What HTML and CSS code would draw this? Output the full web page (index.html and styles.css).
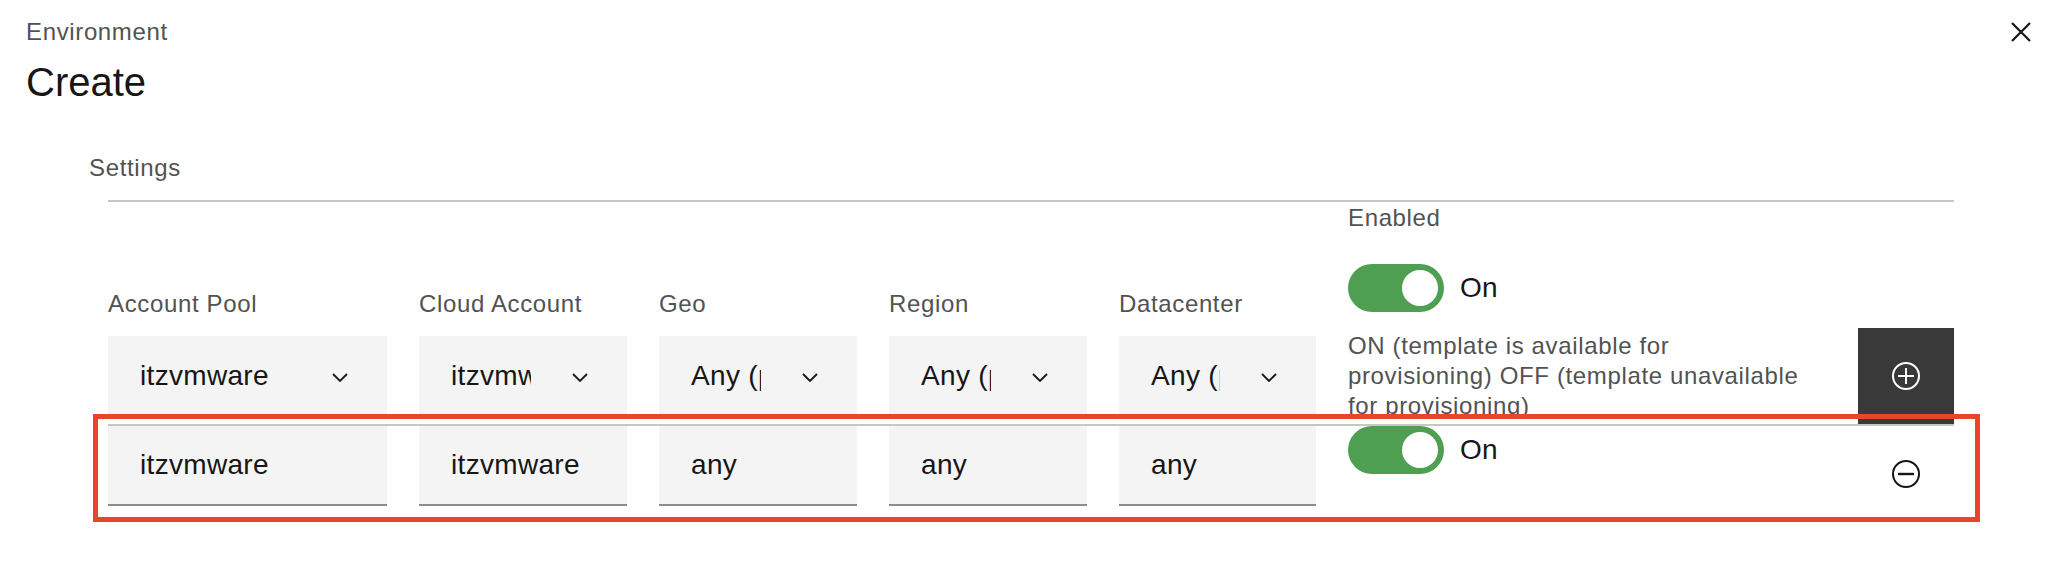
FILE: index.html
```html
<!DOCTYPE html>
<html lang="en">
<head>
<meta charset="utf-8">
<title>Environment - Create</title>
<link rel="stylesheet" href="styles.css">
</head>
<body>
<div class="modal">
  <header class="modal-header">
    <div class="titles">
      <p class="modal-label">Environment</p>
      <h2 class="modal-heading">Create</h2>
    </div>
    <button class="close" aria-label="Close">
      <svg width="20" height="20" viewBox="0 0 20 20"><path d="M1 1L19 19M19 1L1 19" stroke="#161616" stroke-width="2.2" fill="none"/></svg>
    </button>
  </header>

  <section class="settings">
    <p class="section-title">Settings</p>
    <div class="table">
      <div class="row row-first">
        <div class="field">
          <span class="field-label">Account Pool</span>
          <div class="select"><span class="select-text">itzvmware</span><svg class="chevron" width="16" height="9" viewBox="0 0 16 9"><polyline points="1,1 8,8 15,1" fill="none" stroke="#161616" stroke-width="1.8"/></svg></div>
        </div>
        <div class="field">
          <span class="field-label">Cloud Account</span>
          <div class="select"><span class="select-text">itzvmware</span><svg class="chevron" width="16" height="9" viewBox="0 0 16 9"><polyline points="1,1 8,8 15,1" fill="none" stroke="#161616" stroke-width="1.8"/></svg></div>
        </div>
        <div class="field">
          <span class="field-label">Geo</span>
          <div class="select"><span class="select-text">Any (pick one)</span><svg class="chevron" width="16" height="9" viewBox="0 0 16 9"><polyline points="1,1 8,8 15,1" fill="none" stroke="#161616" stroke-width="1.8"/></svg></div>
        </div>
        <div class="field">
          <span class="field-label">Region</span>
          <div class="select"><span class="select-text">Any (pick one)</span><svg class="chevron" width="16" height="9" viewBox="0 0 16 9"><polyline points="1,1 8,8 15,1" fill="none" stroke="#161616" stroke-width="1.8"/></svg></div>
        </div>
        <div class="field">
          <span class="field-label">Datacenter</span>
          <div class="select"><span class="select-text">Any (pick one)</span><svg class="chevron" width="16" height="9" viewBox="0 0 16 9"><polyline points="1,1 8,8 15,1" fill="none" stroke="#161616" stroke-width="1.8"/></svg></div>
        </div>
        <div class="toggle-col">
          <span class="field-label toggle-label">Enabled</span>
          <div class="toggle"><span class="switch"><span class="knob"></span></span><span class="toggle-text">On</span></div>
          <p class="helper">ON (template is available for provisioning) OFF (template unavailable for provisioning)</p>
        </div>
        <button class="icon-btn add" aria-label="Add">
          <svg width="32" height="32" viewBox="0 0 32 32"><circle cx="16" cy="16" r="13" fill="none" stroke="#ffffff" stroke-width="2"/><path d="M8 16H24M16 8V24" stroke="#ffffff" stroke-width="2" fill="none"/></svg>
        </button>
      </div>

      <div class="row row-second">
        <div class="text-input">itzvmware</div>
        <div class="text-input">itzvmware</div>
        <div class="text-input">any</div>
        <div class="text-input">any</div>
        <div class="text-input">any</div>
        <div class="toggle-col-plain">
          <div class="toggle"><span class="switch"><span class="knob"></span></span><span class="toggle-text">On</span></div>
        </div>
        <button class="icon-btn remove" aria-label="Remove">
          <svg width="32" height="32" viewBox="0 0 32 32"><circle cx="16" cy="16" r="13" fill="none" stroke="#161616" stroke-width="2"/><path d="M8 16H24" stroke="#161616" stroke-width="2.4" fill="none"/></svg>
        </button>
      </div>
    </div>
  </section>

  <div class="highlight"></div>
</div>
</body>
</html>
```

FILE: styles.css
```css
* {
  box-sizing: border-box;
  margin: 0;
  padding: 0;
}

body {
  font-family: "Liberation Sans", Arial, sans-serif;
  background: #ffffff;
  color: #161616;
  width: 2058px;
  height: 586px;
  overflow: hidden;
}

.modal {
  position: relative;
  height: 586px;
}

.modal-header {
  display: flex;
  justify-content: space-between;
  align-items: flex-start;
  padding: 16px 17px 0 26px;
}

.modal-label {
  font-size: 24px;
  line-height: 32px;
  letter-spacing: 0.64px;
  color: #525252;
}

.modal-heading {
  font-size: 40px;
  line-height: 48px;
  font-weight: 400;
  margin-top: 10px;
  color: #161616;
}

.close {
  width: 40px;
  height: 40px;
  margin-top: -4px;
  border: 0;
  background: none;
  display: flex;
  align-items: center;
  justify-content: center;
}

.settings {
  margin-top: 46px;
}

.section-title {
  margin-left: 89px;
  margin-bottom: 16px;
  font-size: 24px;
  line-height: 32px;
  letter-spacing: 0.64px;
  color: #525252;
}

.table {
  margin-left: 108px;
  width: 1846px;
  border-top: 2px solid #c6c6c6;
}

.row {
  display: grid;
  grid-template-columns: 279px 208px 198px 198px 197px 1fr 96px;
  column-gap: 32px;
}

.row-first {
  height: 224px;
  border-bottom: 2px solid #c6c6c6;
}

.row-second {
  height: 96px;
}

.field {
  align-self: end;
  padding-bottom: 8px;
}

.field-label {
  display: block;
  font-size: 24px;
  line-height: 32px;
  letter-spacing: 0.64px;
  color: #525252;
  margin-bottom: 16px;
}

.select {
  height: 80px;
  background: #f4f4f4;
  display: flex;
  align-items: center;
  padding: 0 39px 0 32px;
}

.select-text {
  flex: 1;
  min-width: 0;
  overflow: hidden;
  white-space: nowrap;
  font-size: 28px;
  letter-spacing: 0.32px;
  color: #161616;
  margin-right: 41px;
}

.chevron {
  flex: none;
  margin-top: 2px;
}

.toggle-col {
  align-self: stretch;
  overflow: hidden;
  margin-bottom: 8px;
}

.toggle-label {
  margin-bottom: 30px;
}

.toggle-col-plain {
  align-self: start;
}

.toggle {
  display: flex;
  align-items: center;
  height: 48px;
}

.switch {
  width: 96px;
  height: 48px;
  border-radius: 24px;
  background: #4e9f52;
  display: flex;
  justify-content: flex-end;
  align-items: center;
  padding-right: 6px;
}

.knob {
  width: 36px;
  height: 36px;
  border-radius: 50%;
  background: #ffffff;
}

.toggle-text {
  margin-left: 16px;
  font-size: 28px;
  letter-spacing: 0.32px;
  color: #161616;
}

.helper {
  margin-top: 19px;
  max-width: 460px;
  font-size: 24px;
  line-height: 30px;
  letter-spacing: 0.64px;
  color: #525252;
}

.icon-btn {
  width: 96px;
  height: 96px;
  border: 0;
  display: flex;
  align-items: center;
  justify-content: center;
}

.add {
  background: #393939;
  align-self: end;
}

.remove {
  background: transparent;
  align-self: start;
}

.text-input {
  align-self: start;
  height: 80px;
  background: #f4f4f4;
  border-bottom: 2px solid #8d8d8d;
  padding-left: 32px;
  display: flex;
  align-items: center;
  font-size: 28px;
  letter-spacing: 0.32px;
  color: #161616;
}

.highlight {
  position: absolute;
  left: 93px;
  top: 414px;
  width: 1887px;
  height: 108px;
  border: 5px solid #e8452c;
  pointer-events: none;
}
```
